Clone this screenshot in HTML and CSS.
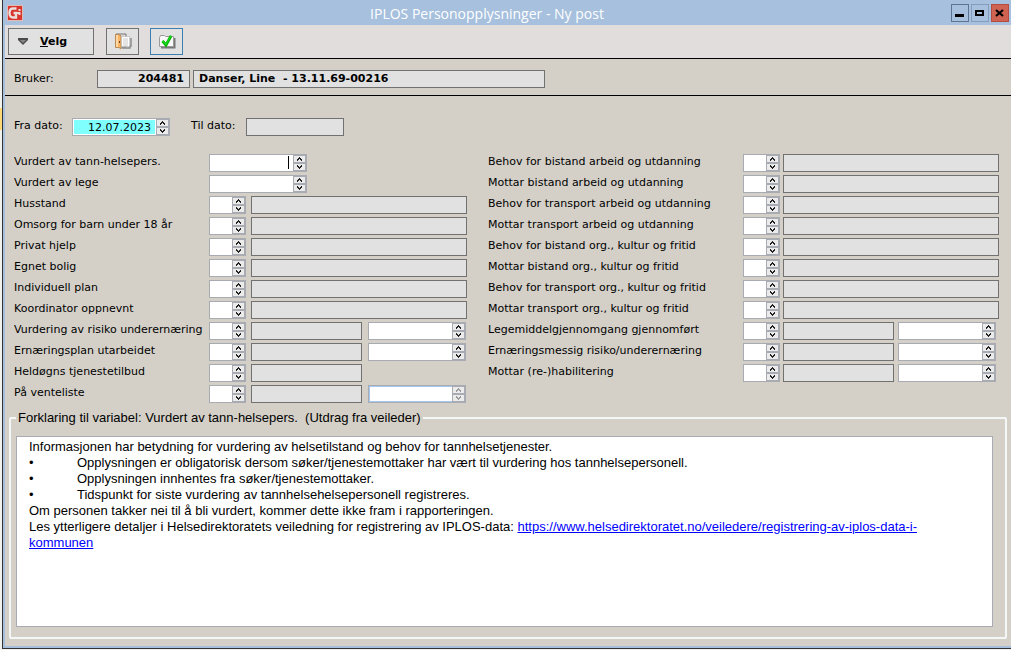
FILE: index.html
```html
<!DOCTYPE html>
<html lang="no">
<head>
<meta charset="utf-8">
<title>IPLOS Personopplysninger - Ny post</title>
<link rel="stylesheet" href="styles.css">
</head>
<body>
<div class="window">
  <header class="titlebar">
    <svg class="app-icon" width="16" height="16" viewBox="0 0 16 16" aria-hidden="true"><rect width="16" height="16" fill="#e3b9b8"/><rect x="1" y="1" width="14" height="14" fill="#d8352d"/><path d="M9.500 3.500H6Q2.500 3.500 2.500 8T6 12.500H9V8H6.500" fill="none" stroke="#eadfdd" stroke-width="2.400"/><path d="M11.500 4h2v2h-2zM9 7h4.500v2H9zM11.500 9h2v1h-2z" fill="#eadfdd"/></svg>
    <h1 class="title">IPLOS Personopplysninger - Ny post</h1>
    <div class="window-buttons">
      <button class="win-btn win-min" aria-label="Minimer"><svg width="10" height="8" viewBox="0 0 10 8"><path d="M0 5h9v3H0z"/></svg></button>
      <button class="win-btn" aria-label="Maksimer"><svg width="10" height="8" viewBox="0 0 10 8"><path d="M1 2h7v4H1z" fill="none" stroke="#000" stroke-width="2"/></svg></button>
      <button class="win-btn win-close" aria-label="Lukk"><svg width="10" height="8" viewBox="0 0 10 8"><path d="M1 1l7 6M8 1L1 7" stroke="#000" stroke-width="2.200"/></svg></button>
    </div>
  </header>
  <nav class="toolbar">
    <button class="tool tool-menu"><svg width="10" height="7" viewBox="0 0 10 7" aria-hidden="true"><path d="M0 0h10v2L5 7 0 2z" fill="#4c4c4c"/><path d="M2 2h6L5 5z" fill="#888"/></svg><span><u>V</u>elg</span></button>
    <button class="tool tool-icon" aria-label="Avslutt"><svg width="18" height="17" viewBox="0 0 18 17"><path d="M2 1h10v13H2z" fill="#d9d9d9" stroke="#777"/><path d="M1.500 1.500H5l2 1.500v13l-2-1.500H1.500z" fill="#fbb562" stroke="#b98a55"/><path d="M2 2h2v12H2z" fill="#fdd8a5"/><path d="M5 8h1v2H5z" fill="#643"/><path d="M8 15h8v-2h1V5" fill="none" stroke="#8b8b8b" stroke-width="1.500"/><path d="M7.500 3.500h8v10h-8z" fill="#fff" stroke="#aaa" stroke-dasharray="1 1"/><path d="M9 6h5M9 8h5M9 10h5M9 12h5" stroke="#c9c9c9"/></svg></button>
    <button class="tool tool-icon tool-active" aria-label="Lagre"><svg width="18" height="15" viewBox="0 0 18 15"><path d="M3 13.500h13.500V4" fill="none" stroke="#777" stroke-width="2"/><path d="M1.500 3.500l1-2h4l1 1h8v10h-14z" fill="#f8f8f8" stroke="#999"/><path d="M4.500 7L8 11l5-9" fill="none" stroke="#0a0" stroke-width="2.800"/><path d="M4.500 7L8 10.500l5-9" fill="none" stroke="#1be01b" stroke-width="1.200"/></svg></button>
  </nav>
  <section class="user">
    <label class="user-label" for="bruker">Bruker:</label>
    <input class="box user-id" id="bruker" value="204481" readonly>
    <input class="box user-name" aria-label="Navn" value="Danser, Line  - 13.11.69-00216" readonly>
  </section>
  <main class="content">
    <div class="dates">
      <label class="from-label" for="fra">Fra dato:</label>
      <span class="spin wide date"><input id="fra" value="12.07.2023"><button class="up" aria-label="Opp"></button><button class="down" aria-label="Ned"></button></span>
      <label class="to-label" for="til">Til dato:</label>
      <input class="box to-date" id="til" readonly>
    </div>
    <div class="columns">
      <div class="fields">
        <div class="row"><label for="a1">Vurdert av tann-helsepers.</label><span class="spin wide"><input id="a1"><i class="caret"></i><button class="up" aria-label="Opp"></button><button class="down" aria-label="Ned"></button></span></div>
        <div class="row"><label for="a2">Vurdert av lege</label><span class="spin wide"><input id="a2"><button class="up" aria-label="Opp"></button><button class="down" aria-label="Ned"></button></span></div>
        <div class="row"><label for="a3">Husstand</label><span class="spin"><input id="a3"><button class="up" aria-label="Opp"></button><button class="down" aria-label="Ned"></button></span><input class="box" aria-label="Husstand, tekst" readonly></div>
        <div class="row"><label for="a4">Omsorg for barn under 18 år</label><span class="spin"><input id="a4"><button class="up" aria-label="Opp"></button><button class="down" aria-label="Ned"></button></span><input class="box" aria-label="Omsorg for barn, tekst" readonly></div>
        <div class="row"><label for="a5">Privat hjelp</label><span class="spin"><input id="a5"><button class="up" aria-label="Opp"></button><button class="down" aria-label="Ned"></button></span><input class="box" aria-label="Privat hjelp, tekst" readonly></div>
        <div class="row"><label for="a6">Egnet bolig</label><span class="spin"><input id="a6"><button class="up" aria-label="Opp"></button><button class="down" aria-label="Ned"></button></span><input class="box" aria-label="Egnet bolig, tekst" readonly></div>
        <div class="row"><label for="a7">Individuell plan</label><span class="spin"><input id="a7"><button class="up" aria-label="Opp"></button><button class="down" aria-label="Ned"></button></span><input class="box" aria-label="Individuell plan, tekst" readonly></div>
        <div class="row"><label for="a8">Koordinator oppnevnt</label><span class="spin"><input id="a8"><button class="up" aria-label="Opp"></button><button class="down" aria-label="Ned"></button></span><input class="box" aria-label="Koordinator, tekst" readonly></div>
        <div class="row"><label for="a9">Vurdering av risiko underernæring</label><span class="spin"><input id="a9"><button class="up" aria-label="Opp"></button><button class="down" aria-label="Ned"></button></span><input class="box short" aria-label="Risiko, tekst" readonly><span class="spin wide"><input aria-label="Risiko, dato"><button class="up" aria-label="Opp"></button><button class="down" aria-label="Ned"></button></span></div>
        <div class="row"><label for="a10">Ernæringsplan utarbeidet</label><span class="spin"><input id="a10"><button class="up" aria-label="Opp"></button><button class="down" aria-label="Ned"></button></span><input class="box short" aria-label="Ernæringsplan, tekst" readonly><span class="spin wide"><input aria-label="Ernæringsplan, dato"><button class="up" aria-label="Opp"></button><button class="down" aria-label="Ned"></button></span></div>
        <div class="row"><label for="a11">Heldøgns tjenestetilbud</label><span class="spin"><input id="a11"><button class="up" aria-label="Opp"></button><button class="down" aria-label="Ned"></button></span><input class="box short" aria-label="Heldøgns tjenestetilbud, tekst" readonly></div>
        <div class="row"><label for="a12">På venteliste</label><span class="spin"><input id="a12"><button class="up" aria-label="Opp"></button><button class="down" aria-label="Ned"></button></span><input class="box short" aria-label="På venteliste, tekst" readonly><span class="spin wide off"><input aria-label="På venteliste, dato" disabled><button class="up" aria-label="Opp" disabled></button><button class="down" aria-label="Ned" disabled></button></span></div>
      </div>
      <div class="fields fields-right">
        <div class="row"><label for="b1">Behov for bistand arbeid og utdanning</label><span class="spin"><input id="b1"><button class="up" aria-label="Opp"></button><button class="down" aria-label="Ned"></button></span><input class="box" aria-label="Behov for bistand arbeid, tekst" readonly></div>
        <div class="row"><label for="b2">Mottar bistand arbeid og utdanning</label><span class="spin"><input id="b2"><button class="up" aria-label="Opp"></button><button class="down" aria-label="Ned"></button></span><input class="box" aria-label="Mottar bistand arbeid, tekst" readonly></div>
        <div class="row"><label for="b3">Behov for transport arbeid og utdanning</label><span class="spin"><input id="b3"><button class="up" aria-label="Opp"></button><button class="down" aria-label="Ned"></button></span><input class="box" aria-label="Behov for transport arbeid, tekst" readonly></div>
        <div class="row"><label for="b4">Mottar transport arbeid og utdanning</label><span class="spin"><input id="b4"><button class="up" aria-label="Opp"></button><button class="down" aria-label="Ned"></button></span><input class="box" aria-label="Mottar transport arbeid, tekst" readonly></div>
        <div class="row"><label for="b5">Behov for bistand org., kultur og fritid</label><span class="spin"><input id="b5"><button class="up" aria-label="Opp"></button><button class="down" aria-label="Ned"></button></span><input class="box" aria-label="Behov for bistand kultur, tekst" readonly></div>
        <div class="row"><label for="b6">Mottar bistand org., kultur og fritid</label><span class="spin"><input id="b6"><button class="up" aria-label="Opp"></button><button class="down" aria-label="Ned"></button></span><input class="box" aria-label="Mottar bistand kultur, tekst" readonly></div>
        <div class="row"><label for="b7">Behov for transport org., kultur og fritid</label><span class="spin"><input id="b7"><button class="up" aria-label="Opp"></button><button class="down" aria-label="Ned"></button></span><input class="box" aria-label="Behov for transport kultur, tekst" readonly></div>
        <div class="row"><label for="b8">Mottar transport org., kultur og fritid</label><span class="spin"><input id="b8"><button class="up" aria-label="Opp"></button><button class="down" aria-label="Ned"></button></span><input class="box" aria-label="Mottar transport kultur, tekst" readonly></div>
        <div class="row"><label for="b9">Legemiddelgjennomgang gjennomført</label><span class="spin"><input id="b9"><button class="up" aria-label="Opp"></button><button class="down" aria-label="Ned"></button></span><input class="box short" aria-label="Legemiddelgjennomgang, tekst" readonly><span class="spin wide"><input aria-label="Legemiddelgjennomgang, dato"><button class="up" aria-label="Opp"></button><button class="down" aria-label="Ned"></button></span></div>
        <div class="row"><label for="b10">Ernæringsmessig risiko/underernæring</label><span class="spin"><input id="b10"><button class="up" aria-label="Opp"></button><button class="down" aria-label="Ned"></button></span><input class="box short" aria-label="Ernæringsmessig risiko, tekst" readonly><span class="spin wide"><input aria-label="Ernæringsmessig risiko, dato"><button class="up" aria-label="Opp"></button><button class="down" aria-label="Ned"></button></span></div>
        <div class="row"><label for="b11">Mottar (re-)habilitering</label><span class="spin"><input id="b11"><button class="up" aria-label="Opp"></button><button class="down" aria-label="Ned"></button></span><input class="box short" aria-label="Habilitering, tekst" readonly><span class="spin wide"><input aria-label="Habilitering, dato"><button class="up" aria-label="Opp"></button><button class="down" aria-label="Ned"></button></span></div>
      </div>
    </div>
    <fieldset class="explain">
      <legend>Forklaring til variabel: Vurdert av tann-helsepers.&nbsp; (Utdrag fra veileder)</legend>
      <div class="help">
        <p>Informasjonen har betydning for vurdering av helsetilstand og behov for tannhelsetjenester.</p>
        <ul>
          <li>Opplysningen er obligatorisk dersom søker/tjenestemottaker har vært til vurdering hos tannhelsepersonell.</li>
          <li>Opplysningen innhentes fra søker/tjenestemottaker.</li>
          <li>Tidspunkt for siste vurdering av tannhelsehelsepersonell registreres.</li>
        </ul>
        <p>Om personen takker nei til å bli vurdert, kommer dette ikke fram i rapporteringen.</p>
        <p>Les ytterligere detaljer i Helsedirektoratets veiledning for registrering av IPLOS-data: <a href="https://www.helsedirektoratet.no/veiledere/registrering-av-iplos-data-i-kommunen">https://www.helsedirektoratet.no/veiledere/registrering-av-iplos-data-i-kommunen</a></p>
      </div>
    </fieldset>
  </main>
</div>
</body>
</html>
```
FILE: styles.css
```css
* { box-sizing: border-box; }
body {
  margin: 0;
  min-height: 100vh;
  display: flex;
  padding: 0 0 1px 2px;
  background: linear-gradient(#ffd877, #ffd877) 0 108px / 2px 22px no-repeat, #f1f1ee;
  font: 11px/18px "DejaVu Sans", Verdana, sans-serif;
  color: #000;
}
input, button { font: inherit; color: inherit; margin: 0; padding: 0; border: 0; border-radius: 0; outline: 0; min-width: 0; }
.window {
  flex: 1;
  min-width: 0;
  display: flex;
  flex-direction: column;
  background: #d4d0c8;
  border: solid #333;
  border-width: 0 0 1px 1px;
  box-shadow: inset 2px -2px 0 #a6bfdc;
  padding: 0 0 2px 2px;
}
.titlebar { display: flex; align-items: center; height: 25px; padding: 0 2px; background: #a6c0dd; }
.title { flex: 1; margin: 0; padding-top: 2px; text-align: center; font: 14px/20px "Open Sans", sans-serif; color: #fff; }
.window-buttons { display: flex; gap: 2px; }
.win-btn { display: grid; place-items: center; width: 18px; height: 18px; background: #a6c0dd; border: 1px solid #859dbd; }
.win-min { border-color: #5f7392; }
.win-close { background: #cd6350; border-color: #b44c3e; }
.toolbar { display: flex; align-items: center; height: 34px; padding: 0 3px; background: #e1dddd; border-bottom: 1px solid #000; }
.tool { display: flex; align-items: center; height: 27px; border: 1px solid #717171; background: #e1e1e1; }
.tool-menu { width: 86px; gap: 12px; padding-left: 9px; margin-right: 12px; font-weight: bold; }
.tool-menu span { padding-top: 1px; }
.tool-menu svg { margin-right: 0; }
.tool-icon { width: 33px; justify-content: center; margin-right: 11px; }
.tool-active { border-color: #3c7fb1; }
.user { display: flex; align-items: center; height: 37px; padding: 3px 9px 0; border-bottom: 1px solid #000; }
.user-label { width: 83px; }
.box { flex: 1; height: 18px; border: 1px solid #717171; background: #e1e1e1; padding: 1px 5px 0; }
.user-id { flex: none; width: 93px; text-align: right; font-weight: bold; margin-right: 3px; }
.user-name { flex: none; width: 352px; font-weight: bold; white-space: pre; }
.content { flex: 1; display: flex; flex-direction: column; padding: 22px 4px 7px; }
.dates { display: flex; padding-left: 5px; margin-bottom: 18px; }
.dates label { line-height: 16px; }
.from-label { width: 58px; }
.to-label { width: 55px; margin-left: 21px; }
.to-date { flex: none; width: 98px; }
.columns { display: grid; grid-template-columns: minmax(0, 453fr) minmax(0, 511fr); gap: 21px; padding: 0 8px 0 5px; }
.fields { display: flex; flex-direction: column; gap: 3px; }
.row { display: flex; height: 18px; }
.row label { flex: none; width: 195px; line-height: 16px; white-space: nowrap; overflow: hidden; }
.fields-right .row label { width: 255px; }
.spin {
  flex: none;
  position: relative;
  display: grid;
  grid-template: 6px 6px / 1fr 11px;
  gap: 2px 1px;
  width: 37px;
  height: 18px;
  padding: 2px 2px 2px 1px;
  background: #a9abb3;
}
.wide { width: 98px; }
.spin input { grid-row: 1 / 3; width: 100%; height: 16px; margin-top: -1px; background: #fff; }
.spin button { display: grid; place-items: center; grid-column: 2; background: #ebebeb; }
.spin button::before {
  content: "";
  width: 5px;
  height: 4px;
  background: #222;
  clip-path: polygon(40% 0, 60% 0, 60% 25%, 80% 25%, 80% 50%, 100% 50%, 100% 100%, 80% 100%, 80% 75%, 60% 75%, 60% 50%, 40% 50%, 40% 75%, 20% 75%, 20% 100%, 0 100%, 0 50%, 20% 50%, 20% 25%, 40% 25%);
}
.spin .down::before { transform: rotate(180deg); }
.spin.off button::before { background: #999; }
.spin.off input { border: solid #a6c8ee; border-width: 1px 0 1px 1px; }
.spin.date input { background: #80ffff; text-align: right; padding: 1px 4px 0 0; border: 1px solid #fff; }
.caret { position: absolute; right: 18px; top: 2px; width: 1px; height: 13px; background: #000; }
.row .box { margin-left: 5px; }
.row .short { flex: none; width: 111px; margin-right: 6px; }
.fields-right .row .box { margin-left: 3px; }
.fields-right .row .short { margin-right: 4px; }
.explain {
  flex: 1;
  display: flex;
  min-width: 0;
  margin: 7px 0 0;
  padding: 10px 12px 10px 5px;
  border: 2px solid #f4f7f8;
  border-radius: 2px;
  font: 13px/16px "Liberation Sans", Arial, sans-serif;
}
.explain legend { padding: 0 2px; }
.help { flex: 1; padding: 2px 12px; background: #fff; border: 1px solid #a9abb3; }
.help p, .help ul { margin: 0; padding: 0; }
.help ul { list-style: none; }
.help li { display: flex; }
.help li::before { content: "•"; flex: none; width: 48px; }
.help a { color: #00f; }
```
